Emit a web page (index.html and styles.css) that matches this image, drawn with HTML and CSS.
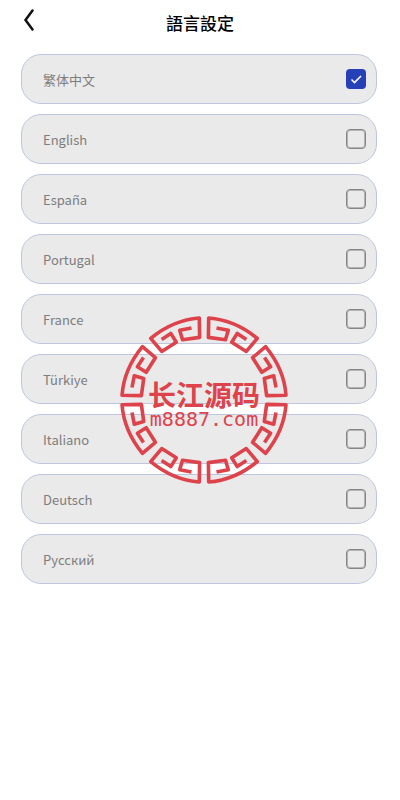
FILE: index.html
```html
<!DOCTYPE html>
<html lang="zh-Hant">
<head>
    <meta charset="UTF-8">
    <meta name="viewport" content="width=device-width, initial-scale=1.0">
    <title>語言設定</title>
    <link rel="stylesheet" href="styles.css">
</head>
<body>
    <header class="navbar">
        <button type="button" class="back" aria-label="返回">
            <svg width="12" height="22" viewBox="0 0 12 22"><path d="M9.5 1.5 L2.5 11 L9.5 20.5"/></svg>
        </button>
        <h1 class="title">語言設定</h1>
    </header>

    <main class="lang-list">
        <label class="lang-item"><span>繁体中文</span><input type="checkbox" name="lang" value="zh" checked></label>
        <label class="lang-item"><span>English</span><input type="checkbox" name="lang" value="en"></label>
        <label class="lang-item"><span>España</span><input type="checkbox" name="lang" value="es"></label>
        <label class="lang-item"><span>Portugal</span><input type="checkbox" name="lang" value="pt"></label>
        <label class="lang-item"><span>France</span><input type="checkbox" name="lang" value="fr"></label>
        <label class="lang-item"><span>Türkiye</span><input type="checkbox" name="lang" value="tr"></label>
        <label class="lang-item"><span>Italiano</span><input type="checkbox" name="lang" value="it"></label>
        <label class="lang-item"><span>Deutsch</span><input type="checkbox" name="lang" value="de"></label>
        <label class="lang-item"><span>Русский</span><input type="checkbox" name="lang" value="ru"></label>
    </main>

    <!-- 水印 -->
    <div class="watermark">
        <svg class="ring" viewBox="-84 -84 168 168">
            <defs>
                <path id="fret" d="M12.5 -72 L24.3 -69.7 L21.5 -60.3 L4.4 -62.6 L4.7 -82 Q31 -80 53.3 -61.6 L42.3 -48.6 L27.7 -57.8 L33.2 -66.6 L42.4 -60.5"/>
                <g id="quarter">
                    <use href="#fret"/>
                    <use href="#fret" transform="matrix(0 -1 -1 0 0 0)"/>
                </g>
            </defs>
            <use href="#quarter"/>
            <use href="#quarter" transform="rotate(90)"/>
            <use href="#quarter" transform="rotate(180)"/>
            <use href="#quarter" transform="rotate(270)"/>
        </svg>
        <div class="mark-text">
            <div class="mark-name">长江源码</div>
            <div class="mark-site">m8887.com</div>
        </div>
    </div>
</body>
</html>
```
FILE: styles.css
```css
* {
    box-sizing: border-box;
}
body {
    margin: 0;
    background-color: #fff;
    font-family: "Noto Sans CJK SC", "Noto Sans", sans-serif;
    position: relative;
}
.navbar {
    display: grid;
    grid-template-columns: 40px 1fr 40px;
    align-items: center;
    height: 44px;
}
.back {
    display: flex;
    justify-content: flex-end;
    padding: 0 5px 4px 0;
    border: none;
    background: none;
    cursor: pointer;
}
.back svg {
    fill: none;
    stroke: #111;
    stroke-width: 2.5;
    stroke-linecap: round;
}
.title {
    margin: 0;
    font-size: 17px;
    font-weight: 500;
    text-align: center;
    color: #000;
}
.lang-list {
    display: flex;
    flex-direction: column;
    gap: 10px;
    padding: 10px 23px 0 21px;
}
.lang-item {
    display: flex;
    align-items: center;
    justify-content: space-between;
    height: 50px;
    padding: 0 10px 0 21px;
    border: 1px solid #bfc5de;
    border-radius: 20px;
    background-color: #eaeaea;
    color: #7d7d7d;
    font-size: 13px;
    cursor: pointer;
}
.lang-item input {
    appearance: none;
    width: 20px;
    height: 20px;
    margin: 0;
    border: 1px solid #858585;
    border-radius: 4px;
    box-shadow: inset 0 0 0 1px #b4b4b4;
}
.lang-item input:checked {
    border: none;
    box-shadow: none;
    background: #2640b8 url("data:image/svg+xml,%3Csvg xmlns='http://www.w3.org/2000/svg' viewBox='0 0 20 20'%3E%3Cpath d='M5.5 10.5l3 3 6.5-6.5' fill='none' stroke='%23fff' stroke-width='1.6'/%3E%3C/svg%3E");
}

/* 水印覆盖在列表上方 */
.watermark {
    position: absolute;
    top: 316px;
    left: calc(50% + 4px);
    width: 168px;
    height: 168px;
    margin-left: -84px;
    display: grid;
    place-items: center;
    pointer-events: none;
    color: #de434b;
}
.ring {
    grid-area: 1 / 1;
    width: 100%;
    height: 100%;
    fill: none;
    stroke: #de434b;
    stroke-width: 3.6;
    stroke-linejoin: round;
}
.mark-text {
    grid-area: 1 / 1;
    padding-top: 10px;
    text-align: center;
    white-space: nowrap;
}
.mark-name {
    font-size: 28px;
    line-height: 28px;
    font-weight: 700;
}
.mark-site {
    font-family: "DejaVu Sans Mono", monospace;
    font-size: 20px;
    line-height: 22px;
}
```
